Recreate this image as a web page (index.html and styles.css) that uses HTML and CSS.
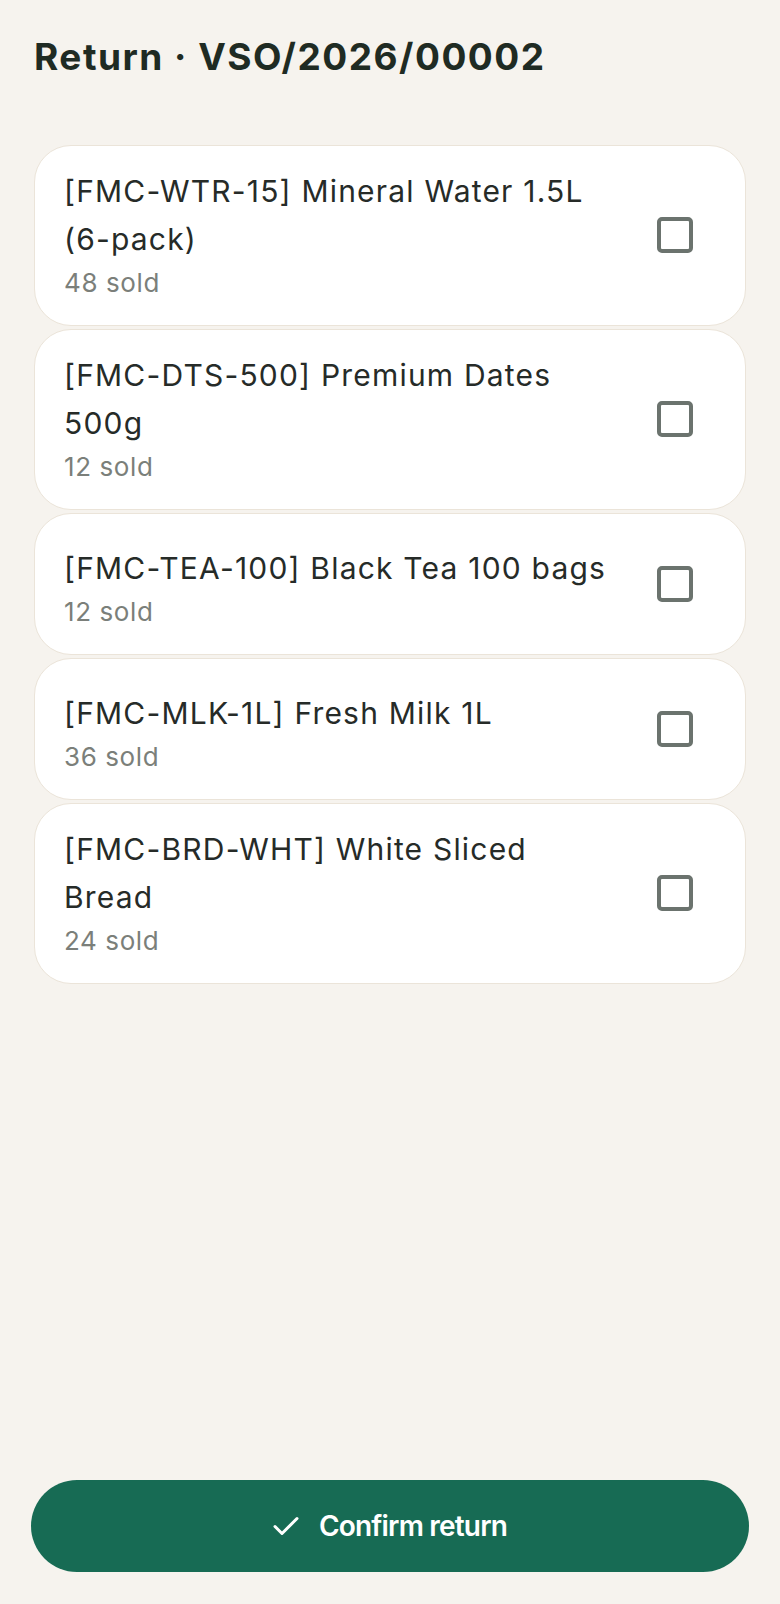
FILE: index.html
```html
<!DOCTYPE html>
<html lang="en">
<head>
<meta charset="utf-8">
<title>Return · VSO/2026/00002</title>
<link rel="stylesheet" href="styles.css">
</head>
<body>
<div class="page">
  <h1 class="title">Return · VSO/2026/00002</h1>
  <ul class="list">
    <li class="card">
      <div class="info">
        <div class="name">[FMC-WTR-15] Mineral Water 1.5L <span class="nowrap">(6-pack)</span></div>
        <div class="sold">48 sold</div>
      </div>
      <span class="check"></span>
    </li>
    <li class="card">
      <div class="info">
        <div class="name">[FMC-DTS-500] Premium Dates 500g</div>
        <div class="sold">12 sold</div>
      </div>
      <span class="check"></span>
    </li>
    <li class="card">
      <div class="info">
        <div class="name">[FMC-TEA-100] Black Tea 100 bags</div>
        <div class="sold">12 sold</div>
      </div>
      <span class="check"></span>
    </li>
    <li class="card">
      <div class="info">
        <div class="name">[FMC-MLK-1L] Fresh Milk 1L</div>
        <div class="sold">36 sold</div>
      </div>
      <span class="check"></span>
    </li>
    <li class="card">
      <div class="info">
        <div class="name">[FMC-BRD-WHT] White Sliced Bread</div>
        <div class="sold">24 sold</div>
      </div>
      <span class="check"></span>
    </li>
  </ul>
  <button class="confirm" type="button">
    <svg class="confirm-icon" viewBox="0 0 26 20" width="26" height="20" aria-hidden="true">
      <path d="M2 10.5 L9 17.5 L24 2.5" fill="none" stroke="#ffffff" stroke-width="3" stroke-linecap="round" stroke-linejoin="round"/>
    </svg>
    <span>Confirm return</span>
  </button>
</div>
</body>
</html>
```

FILE: styles.css
```css
html, body {
  margin: 0;
  padding: 0;
  background: #f6f3ee;
}

body {
  font-family: Inter, "Noto Sans", "Liberation Sans", sans-serif;
  color: #262b28;
}

.page {
  min-height: 1604px;
  box-sizing: border-box;
  display: flex;
  flex-direction: column;
  padding: 35px 34px 32px 34px;
}

.title {
  margin: 0;
  font-size: 37px;
  line-height: 44px;
  font-weight: 700;
  letter-spacing: 1.5px;
  color: #1f2b23;
}

.list {
  list-style: none;
  margin: 66px 0 0 0;
  padding: 0;
  display: flex;
  flex-direction: column;
  gap: 3px;
}

.card {
  display: flex;
  align-items: center;
  gap: 24px;
  min-height: 142px;
  box-sizing: border-box;
  background: #ffffff;
  border: 1.5px solid #ebe4d9;
  border-radius: 37px;
  padding: 21px 52px 22px 29px;
}

.info {
  flex: 1;
  min-width: 0;
  align-self: stretch;
  display: flex;
  flex-direction: column;
  justify-content: flex-end;
}

.name {
  font-size: 30px;
  line-height: 48px;
  font-weight: 400;
  letter-spacing: 1.2px;
  color: #262b28;
  padding-right: 20px;
}

.nowrap {
  white-space: nowrap;
}

.sold {
  font-size: 26px;
  line-height: 40px;
  letter-spacing: 0.6px;
  color: #7b7f7a;
}

.check {
  flex: none;
  width: 36px;
  height: 36px;
  box-sizing: border-box;
  border: 4px solid #6b736e;
  border-radius: 5px;
}

.confirm {
  margin: auto -3px 0 -3px;
  height: 92px;
  border: none;
  border-radius: 46px;
  background: #176b54;
  color: #ffffff;
  font-family: Inter, "Noto Sans", "Liberation Sans", sans-serif;
  font-size: 28px;
  font-weight: 600;
  letter-spacing: -0.8px;
  display: flex;
  align-items: center;
  justify-content: center;
  gap: 20px;
}

.confirm-icon {
  display: block;
}
```
